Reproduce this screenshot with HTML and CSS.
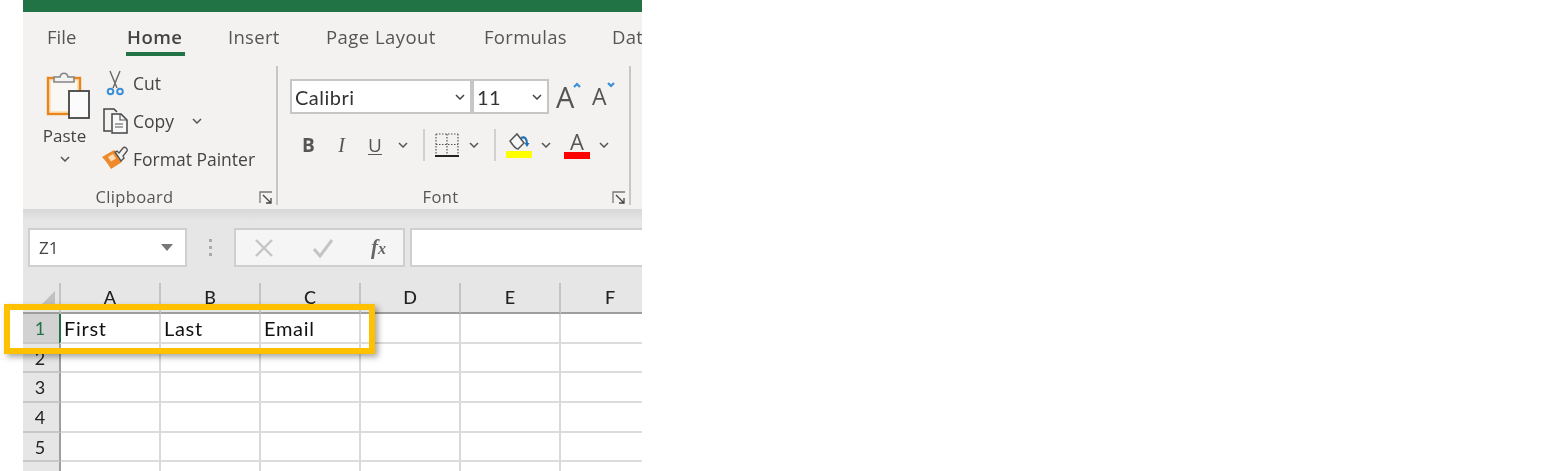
FILE: index.html
```html
<!DOCTYPE html>
<html lang="en">
<head>
    <meta charset="UTF-8">
    <meta name="viewport" content="width=device-width, initial-scale=1.0">
    <title>Excel header row</title>
    <link rel="stylesheet" href="styles.css">
</head>
<body>
    <div class="app">
        <div class="title-bar"></div>

        <nav class="tabs">
            <span class="tab tab-file">File</span>
            <span class="tab tab-home active">Home</span>
            <span class="tab tab-insert">Insert</span>
            <span class="tab tab-layout">Page Layout</span>
            <span class="tab tab-formulas">Formulas</span>
            <span class="tab tab-data">Data</span>
        </nav>

        <div class="ribbon">
            <section class="group group-clipboard">
                <div class="group-body clipboard-body">
                    <div class="paste">
                        <svg class="paste-icon" width="44" height="48" viewBox="0 0 44 48">
                            <rect x="2" y="7" width="32" height="36" fill="#fbe3bd" stroke="#e8861c" stroke-width="2.4"/>
                            <rect x="5" y="10" width="26" height="30" fill="#faf8f5"/>
                            <path d="M8 11V6h6c1-5 7-5 8 0h6v5z" fill="#f3f2f1" stroke="#858585" stroke-width="1.6"/>
                            <rect x="23" y="20" width="20" height="27" fill="#fbfbfb" stroke="#444" stroke-width="1.8"/>
                        </svg>
                        <span class="paste-label">Paste</span>
                        <svg class="chev" width="10" height="6" viewBox="0 0 10 6"><path d="M1 1l4 4 4-4" fill="none" stroke="#555" stroke-width="1.5"/></svg>
                    </div>
                    <div class="clip-actions">
                        <div class="clip-row">
                            <span class="clip-icon">
                                <svg width="26" height="26" viewBox="0 0 26 26">
                                    <path d="M8 1l7 17M18 1l-7 17" fill="none" stroke="#666" stroke-width="1.4"/>
                                    <circle cx="8.500" cy="21.500" r="2.800" fill="none" stroke="#3b8fd6" stroke-width="2"/>
                                    <circle cx="18" cy="21.500" r="2.800" fill="none" stroke="#3b8fd6" stroke-width="2"/>
                                </svg>
                            </span>
                            <span>Cut</span>
                        </div>
                        <div class="clip-row">
                            <span class="clip-icon">
                                <svg width="26" height="26" viewBox="0 0 26 26">
                                    <path d="M9 23H2V1h10l3 3" fill="none" stroke="#444" stroke-width="1.5"/>
                                    <path d="M10 6h9l6 6v13H10z" fill="#f8f8f8" stroke="#444" stroke-width="1.5"/>
                                    <path d="M18 6v6h7M13 16h8M13 19h8" fill="none" stroke="#555" stroke-width="1.200"/>
                                </svg>
                            </span>
                            <span>Copy</span>
                            <svg class="chev copy-chev" width="10" height="6" viewBox="0 0 10 6"><path d="M1 1l4 4 4-4" fill="none" stroke="#555" stroke-width="1.5"/></svg>
                        </div>
                        <div class="clip-row">
                            <span class="clip-icon">
                                <svg width="26" height="26" viewBox="0 0 26 26">
                                    <path d="M0 11L12 4l8 12-11 7C6 18 3 14 0 11z" fill="#ee8a2c"/>
                                    <path d="M6 11l5-3 3 4.500-5 3z" fill="#fbdcb4"/>
                                    <path d="M13 6l6 9 3-3-1-2 4-5c1-2-2-5-4-3l-4 5-2-2z" fill="#f3f2f1" stroke="#555" stroke-width="1.400"/>
                                </svg>
                            </span>
                            <span>Format Painter</span>
                        </div>
                    </div>
                </div>
                <div class="group-label label-clipboard">
                    Clipboard
                    <svg class="launcher" width="14" height="14" viewBox="0 0 14 14"><path d="M1 12V1h12" fill="none" stroke="#777" stroke-width="1.300"/><path d="M4 4l8 8M12 7v5H7" fill="none" stroke="#444" stroke-width="1.300"/></svg>
                </div>
            </section>

            <section class="group group-font">
                <div class="group-body font-body">
                    <div class="font-row">
                        <div class="select select-font">
                            <span>Calibri</span>
                            <svg class="chev" width="10" height="6" viewBox="0 0 10 6"><path d="M1 1l4 4 4-4" fill="none" stroke="#444" stroke-width="1.5"/></svg>
                        </div>
                        <div class="select select-size">
                            <span>11</span>
                            <svg class="chev" width="10" height="6" viewBox="0 0 10 6"><path d="M1 1l4 4 4-4" fill="none" stroke="#444" stroke-width="1.5"/></svg>
                        </div>
                        <span class="grow-font">A<svg class="caret" width="8" height="6" viewBox="0 0 8 6"><path d="M1 5l3-3 3 3" fill="none" stroke="#3b8fd6" stroke-width="2.200"/></svg></span>
                        <span class="shrink-font">A<svg class="caret" width="8" height="6" viewBox="0 0 8 6"><path d="M1 1l3 3 3-3" fill="none" stroke="#3b8fd6" stroke-width="2.200"/></svg></span>
                    </div>
                    <div class="format-row">
                        <span class="fmt fmt-b">B</span>
                        <span class="fmt fmt-i">I</span>
                        <span class="fmt fmt-u">U</span>
                        <svg class="chev chev-u" width="10" height="6" viewBox="0 0 10 6"><path d="M1 1l4 4 4-4" fill="none" stroke="#555" stroke-width="1.5"/></svg>
                        <span class="vsep sep-a"></span>
                        <svg class="borders-icon" width="24" height="24" viewBox="0 0 24 24">
                            <path d="M1 1h22M1 11.500h22M1 1v20M12 1v20M23 1v20" fill="none" stroke="#555" stroke-width="1.200" stroke-dasharray="1.500 1.500"/>
                            <path d="M0 23h24" stroke="#222" stroke-width="2"/>
                        </svg>
                        <svg class="chev chev-b" width="10" height="6" viewBox="0 0 10 6"><path d="M1 1l4 4 4-4" fill="none" stroke="#555" stroke-width="1.5"/></svg>
                        <span class="vsep sep-b"></span>
                        <svg class="fill-icon" width="26" height="26" viewBox="0 0 26 26">
                            <path d="M4 9l7-7 7 9-6 6c-2 0-6-5-8-8z" fill="#f8f8f8" stroke="#555" stroke-width="1.500"/>
                            <path d="M15 6c4-2 6 1 6 6" fill="none" stroke="#1f6fb5" stroke-width="2.200"/>
                            <path d="M18.500 11l2.500 4 2.500-4z" fill="#1f6fb5"/>
                            <rect x="0" y="19" width="26" height="7" fill="#ffff00"/>
                        </svg>
                        <svg class="chev chev-c" width="10" height="6" viewBox="0 0 10 6"><path d="M1 1l4 4 4-4" fill="none" stroke="#555" stroke-width="1.5"/></svg>
                        <span class="color-a">
                            <span class="color-a-letter">A</span>
                            <span class="color-a-bar"></span>
                        </span>
                        <svg class="chev chev-d" width="10" height="6" viewBox="0 0 10 6"><path d="M1 1l4 4 4-4" fill="none" stroke="#555" stroke-width="1.5"/></svg>
                    </div>
                </div>
                <div class="group-label label-font">
                    Font
                    <svg class="launcher" width="14" height="14" viewBox="0 0 14 14"><path d="M1 12V1h12" fill="none" stroke="#777" stroke-width="1.300"/><path d="M4 4l8 8M12 7v5H7" fill="none" stroke="#444" stroke-width="1.300"/></svg>
                </div>
            </section>
        </div>

        <div class="formula-area">
            <div class="name-box">
                <span>Z1</span>
                <svg width="12" height="7" viewBox="0 0 12 7"><path d="M0 0h12L6 7z" fill="#777"/></svg>
            </div>
            <div class="grip"><i></i><i></i><i></i></div>
            <div class="formula-btns">
                <svg width="20" height="20" viewBox="0 0 20 20"><path d="M2 2l16 16M18 2L2 18" stroke="#c4c4c4" stroke-width="2.400"/></svg>
                <svg width="22" height="20" viewBox="0 0 22 20"><path d="M2 11l6 7L20 2" fill="none" stroke="#c4c4c4" stroke-width="3"/></svg>
                <span class="fx">f<span class="fx-x">x</span></span>
            </div>
            <div class="formula-input"></div>
        </div>

        <div class="sheet">
            <div class="head corner"><span class="corner-tri"></span></div>
            <div class="head col">A</div>
            <div class="head col">B</div>
            <div class="head col">C</div>
            <div class="head col">D</div>
            <div class="head col">E</div>
            <div class="head col">F</div>

            <div class="row-head row-sel">1</div>
            <div class="cell cell-active">First</div>
            <div class="cell">Last</div>
            <div class="cell">Email</div>
            <div class="cell"></div>
            <div class="cell"></div>
            <div class="cell"></div>

            <div class="row-head">2</div>
            <div class="cell"></div><div class="cell"></div><div class="cell"></div><div class="cell"></div><div class="cell"></div><div class="cell"></div>
            <div class="row-head">3</div>
            <div class="cell"></div><div class="cell"></div><div class="cell"></div><div class="cell"></div><div class="cell"></div><div class="cell"></div>
            <div class="row-head">4</div>
            <div class="cell"></div><div class="cell"></div><div class="cell"></div><div class="cell"></div><div class="cell"></div><div class="cell"></div>
            <div class="row-head">5</div>
            <div class="cell"></div><div class="cell"></div><div class="cell"></div><div class="cell"></div><div class="cell"></div><div class="cell"></div>
            <div class="row-head"></div>
            <div class="cell"></div><div class="cell"></div><div class="cell"></div><div class="cell"></div><div class="cell"></div><div class="cell"></div>
        </div>
    </div>

    <div class="highlight"></div>
</body>
</html>
```

FILE: styles.css
```css
html, body {
    margin: 0;
    padding: 0;
    height: 100vh;
    overflow: hidden;
    background: #fff;
}
body {
    font-family: "Open Sans", "Noto Sans", sans-serif;
    color: #444;
}
.app {
    width: 619px;
    margin-left: 23px;
    height: 471px;
    overflow: hidden;
    background: #f3f2f1;
    filter: blur(0.35px);
}
.title-bar {
    height: 12px;
    background: #217346;
}

/* tabs */
.tabs {
    display: flex;
    height: 44px;
    font-size: 18.500px;
    letter-spacing: 0.3px;
    white-space: nowrap;
}
.tab {
    box-sizing: border-box;
    flex: none;
    height: 44px;
    line-height: 50px;
    color: #555;
}
.tab-file { margin-left: 24px; width: 80px; letter-spacing: 0; }
.tab-home { width: 101px; font-weight: 600; color: #444; letter-spacing: 0.5px; }
.tab-insert { width: 98px; }
.tab-layout { width: 158px; letter-spacing: 0.45px; }
.tab-formulas { width: 128px; }
.tab-home::after {
    content: "";
    display: block;
    width: 59px;
    height: 4px;
    margin-top: -10px;
    margin-left: -1px;
    background: #217346;
}

/* ribbon */
.ribbon {
    display: flex;
    height: 153px;
    font-size: 17.500px;
}
.group {
    box-sizing: border-box;
    height: 139px;
    margin-top: 10px;
    border-right: 2px solid #c8c6c4;
    position: relative;
    display: flex;
    flex-direction: column;
    flex: none;
}
.group-clipboard { width: 255px; }
.group-font { width: 353px; }
.group-body { box-sizing: border-box; height: 115px; flex: none; }
.group-label {
    text-align: center;
    font-size: 16.500px;
    letter-spacing: 0.35px;
    color: #555;
    line-height: 20px;
    margin-top: 6px;
}
.label-clipboard { padding-right: 30px; }
.label-font { padding-right: 26px; }
.launcher {
    position: absolute;
    right: 3px;
    bottom: 0;
}

/* clipboard group */
.clipboard-body {
    display: flex;
}
.paste {
    width: 79px;
    flex: none;
    padding: 5px 0 0 4px;
    box-sizing: border-box;
    display: flex;
    flex-direction: column;
    align-items: center;
}
.paste-icon { margin-left: 6px; flex: none; }
.paste-label { line-height: 24px; margin-top: 5px; font-size: 17px; }
.paste .chev { margin-top: 8px; }
.clip-actions {
    display: flex;
    flex-direction: column;
    gap: 12px;
    padding-top: 4px;
}
.clip-row {
    display: flex;
    align-items: center;
    height: 26px;
    white-space: nowrap;
}
.clip-icon { width: 31px; height: 26px; }
.copy-chev { margin-left: 18px; }

/* font group */
.font-body { padding: 13px 0 0 12px; }
.font-row {
    display: flex;
    align-items: center;
    height: 35px;
}
.select {
    box-sizing: border-box;
    height: 35px;
    background: #fff;
    border: 2px solid #c8c6c4;
    display: flex;
    align-items: center;
    justify-content: space-between;
    padding: 0 5px 0 3px;
    font-family: Lato, sans-serif;
    color: #333;
    font-size: 20px;
    letter-spacing: 0.5px;
}
.select-font { width: 182px; }
.select-size { width: 77px; }
.grow-font {
    font-size: 29px;
    margin-left: 7px;
    width: 36px;
    position: relative;
    color: #555;
    line-height: 35px;
}
.shrink-font {
    font-size: 23px;
    width: 24px;
    position: relative;
    color: #555;
    line-height: 35px;
}
.caret { position: absolute; }
.grow-font .caret { left: 17px; top: 3px; }
.shrink-font .caret { left: 15px; top: 3px; }

.format-row {
    display: flex;
    align-items: center;
    height: 40px;
    margin-top: 11px;
}
.fmt {
    width: 33px;
    text-align: center;
    font-size: 19px;
    color: #555;
}
.fmt-b { font-weight: 700; margin-left: 2px; }
.fmt-i { font-style: italic; font-family: "Liberation Serif", serif; font-size: 20px; }
.fmt-u { text-decoration: underline; text-underline-offset: 2px; width: 34px; }
.chev { flex: none; }
.chev-u { margin-left: 6px; }
.vsep {
    width: 2px;
    height: 32px;
    background: #d2d0ce;
    flex: none;
}
.sep-a { margin-left: 15px; }
.borders-icon { margin-left: 10px; flex: none; }
.chev-b { margin-left: 10px; }
.sep-b { margin-left: 15px; }
.fill-icon { margin-left: 10px; flex: none; margin-top: -1px; }
.chev-c { margin-left: 9px; }
.color-a {
    width: 26px;
    margin-left: 13px;
    margin-top: -2px;
    display: flex;
    flex-direction: column;
    align-items: center;
    flex: none;
}
.color-a-letter { font-size: 22px; line-height: 22px; color: #555; }
.color-a-bar { width: 26px; height: 7px; background: #ff0000; }
.chev-d { margin-left: 9px; }

/* formula bar */
.formula-area {
    height: 74px;
    box-sizing: border-box;
    padding: 19px 0 16px 5px;
    background: linear-gradient(#d8d8d8, #e6e6e6 12px);
    display: flex;
}
.name-box {
    box-sizing: border-box;
    width: 159px;
    height: 39px;
    flex: none;
    background: #fff;
    border: 2px solid #cfcfcf;
    display: flex;
    align-items: center;
    justify-content: space-between;
    padding: 0 12px 0 9px;
    font-size: 17px;
    color: #444;
}
.grip {
    width: 47px;
    flex: none;
    display: flex;
    flex-direction: column;
    align-items: center;
    justify-content: center;
    gap: 4px;
}
.grip i {
    width: 3px;
    height: 3px;
    background: #aaa;
}
.formula-btns {
    box-sizing: border-box;
    width: 171px;
    height: 39px;
    flex: none;
    background: #f5f5f5;
    border: 2px solid #cfcfcf;
    display: flex;
    align-items: center;
    justify-content: space-between;
    padding: 0 17px 0 18px;
}
.fx {
    font-family: "Liberation Serif", serif;
    font-style: italic;
    font-weight: 700;
    font-size: 21px;
    color: #666;
}
.fx-x { font-size: 16px; }
.formula-input {
    box-sizing: border-box;
    width: 300px;
    height: 39px;
    margin-left: 5px;
    flex: none;
    background: #fff;
    border: 2px solid #cfcfcf;
}

/* sheet */
.sheet {
    display: grid;
    grid-template-columns: 38px repeat(6, 100px);
    grid-template-rows: 31px repeat(6, 29.700px);
    background: #fff;
    font-family: Lato, sans-serif;
}
.head {
    box-sizing: border-box;
    background: #e6e6e6;
    border-bottom: 2px solid #9e9e9e;
    border-right: 2px solid #c4c4c4;
}
.col {
    text-align: center;
    font-size: 18px;
    font-weight: 500;
    line-height: 29px;
    color: #222;
}
.corner { position: relative; }
.corner-tri {
    position: absolute;
    right: 4px;
    bottom: 2px;
    border-style: solid;
    border-width: 0 0 19px 19px;
    border-color: transparent transparent #c0c0c0 transparent;
}
.row-head {
    box-sizing: border-box;
    background: #e6e6e6;
    border-right: 2px solid #9e9e9e;
    border-bottom: 2px solid #c8c8c8;
    text-align: center;
    font-size: 18px;
    line-height: 28px;
    padding-right: 2px;
    color: #222;
}
.row-sel {
    background: #d2d2d2;
    color: #217346;
}
.cell {
    box-sizing: border-box;
    border-right: 2px solid #d9d9d9;
    border-bottom: 2px solid #dcdcdc;
    font-size: 20px;
    letter-spacing: 0.7px;
    line-height: 28px;
    padding-left: 3px;
    color: #111;
}
.cell-active {
    margin-left: -2px;
    padding-left: 3px;
    border-left: 2px solid #217346;
}

/* orange callout over the header row */
.highlight {
    position: absolute;
    left: 4px;
    top: 304px;
    width: 359px;
    height: 38px;
    border: 6px solid #ffc000;
    box-shadow: 3px 3px 6px rgba(0, 0, 0, 0.35);
}
```
